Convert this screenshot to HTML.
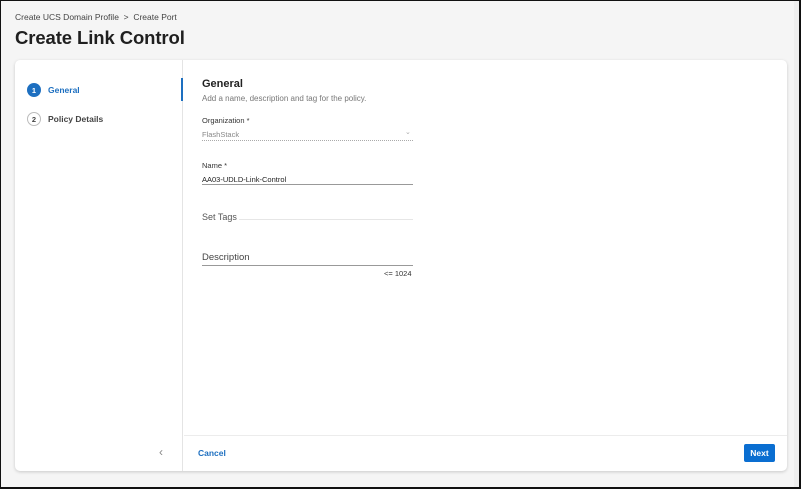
<!DOCTYPE html>
<html><head><style>
*{box-sizing:border-box;margin:0;padding:0}
body{width:801px;height:489px;overflow:hidden;font-family:"Liberation Sans",sans-serif;background:#f5f5f5;position:relative}
.frame{position:absolute;inset:0;border:1px solid #111;border-right:2px solid #111;border-bottom:2px solid #111}
.sb{position:absolute;left:794px;top:1px;width:5px;height:486px;background:#eeeeee}
.crumb{position:absolute;left:15px;top:12px;font-size:8.5px;color:#444}
h1{position:absolute;left:15px;top:27px;font-size:18.5px;font-weight:bold;color:#1f1f1f;letter-spacing:-0.1px}
.card{position:absolute;left:15px;top:60px;width:772px;height:411px;background:#fff;border-radius:5px;box-shadow:0 1px 3px rgba(0,0,0,.18)}
.side{position:absolute;left:0;top:0;width:168px;height:411px;border-right:1px solid #e4e4e4}
.step{position:absolute;left:12px;display:flex;align-items:center;font-size:8.5px;font-weight:bold}
.c{width:14px;height:14px;border-radius:50%;display:flex;align-items:center;justify-content:center;font-size:7.5px;margin-right:7px}
.bar{position:absolute;left:166px;top:18px;width:2px;height:23px;background:#1d6fc0}
.t{position:absolute;font-size:8px;color:#333}
.line{position:absolute;left:187px;width:211px;height:1px}
.foot{position:absolute;left:169px;top:375px;width:603px;height:1px;background:#ececec}
</style></head><body>
<div class="crumb">Create UCS Domain Profile &nbsp;&gt;&nbsp; Create Port</div>
<h1>Create Link Control</h1>
<div class="card">
 <div class="side"></div>
 <div class="bar"></div>
 <div class="step" style="top:23px;color:#1d6fc0"><div class="c" style="background:#1d6fc0;color:#fff">1</div>General</div>
 <div class="step" style="top:52px;color:#444"><div class="c" style="border:1px solid #bbb;color:#444">2</div>Policy Details</div>
 <div style="position:absolute;left:144px;top:385px;color:#888;font-size:12px">&#8249;</div>
 <div class="t" style="left:187px;top:18px;font-size:11px;font-weight:bold;color:#222">General</div>
 <div class="t" style="left:187px;top:34px;color:#777;font-size:8px">Add a name, description and tag for the policy.</div>
 <div class="t" style="left:187px;top:56px;font-size:7.5px">Organization *</div>
 <div class="t" style="left:187px;top:70px;font-size:7.5px;color:#888">FlashStack</div>
 <div class="t" style="left:390px;top:68px;font-size:7px;color:#aaa">&#8964;</div>
 <div class="line" style="top:80px;border-top:1px dotted #aaa"></div>
 <div class="t" style="left:187px;top:101px;font-size:7.5px">Name *</div>
 <div class="t" style="left:187px;top:115px;font-size:7.5px;color:#222">AA03-UDLD-Link-Control</div>
 <div class="line" style="top:124px;background:#999"></div>
 <div class="t" style="left:187px;top:152px;font-size:9px;color:#555">Set Tags</div>
 <div class="line" style="top:159px;background:#e6e6e6;left:224px;width:174px"></div>
 <div class="t" style="left:187px;top:192px;font-size:9.5px;color:#444">Description</div>
 <div class="line" style="top:205px;background:#999"></div>
 <div class="t" style="left:369px;top:209px;font-size:7.5px;color:#333">&lt;= 1024</div>
 <div class="foot"></div>
 <div class="t" style="left:183px;top:388px;color:#1d6fc0;font-weight:bold;font-size:8.5px">Cancel</div>
 <div style="position:absolute;left:729px;top:384px;width:31px;height:18px;background:#0a6ed1;border-radius:2px;color:#fff;font-size:8.5px;font-weight:bold;display:flex;align-items:center;justify-content:center">Next</div>
</div>
<div class="sb"></div>
<div class="frame"></div>
</body></html>
